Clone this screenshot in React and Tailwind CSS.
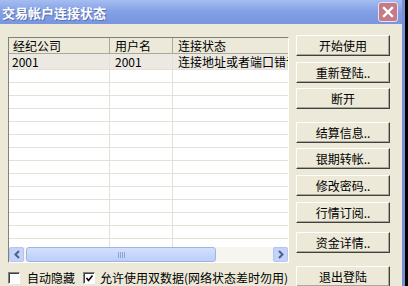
import React from 'react';

const buttons = [
  { label: '开始使用', mt: 'mt-[11px]' },
  { label: '重新登陆..', mt: 'mt-[6px]' },
  { label: '断开', mt: 'mt-[5px]' },
  { label: '结算信息..', mt: 'mt-[13px]' },
  { label: '银期转帐..', mt: 'mt-[5px]' },
  { label: '修改密码..', mt: 'mt-[6px]' },
  { label: '行情订阅..', mt: 'mt-[6px]' },
  { label: '资金详情..', mt: 'mt-[9px]' },
  { label: '退出登陆', mt: 'mt-[13px]' },
];

const emptyRows = Array.from({ length: 14 });

function XpButton({ label, mt }) {
  return (
    <button
      className={`${mt} h-[21px] w-[94px] shrink-0 border border-t-white border-l-white border-r-[#404040] border-b-[#404040] bg-[#ece9d8] text-[12px] leading-none text-black shadow-[inset_-1px_-1px_0_#aca899]`}
    >
      {label}
    </button>
  );
}

function Chevron({ dir }) {
  return (
    <svg width="8" height="9" viewBox="0 0 8 9">
      {dir === 'left' ? (
        <path d="M6 1 L2.5 4.5 L6 8" fill="none" stroke="#4d6185" strokeWidth="2" />
      ) : (
        <path d="M2 1 L5.5 4.5 L2 8" fill="none" stroke="#4d6185" strokeWidth="2" />
      )}
    </svg>
  );
}

function Checkbox({ checked }) {
  return (
    <span className="flex h-[12px] w-[12px] items-center justify-center border border-t-[#808080] border-l-[#808080] border-r-white border-b-white bg-white shadow-[inset_1px_1px_0_#404040]">
      {checked && (
        <svg width="9" height="9" viewBox="0 0 9 9">
          <path d="M1.5 4 L3.5 6.5 L7.5 1.5" fill="none" stroke="#000" strokeWidth="1.6" />
        </svg>
      )}
    </span>
  );
}

export default function App() {
  return (
    <div className="flex h-[286px] w-[408px] overflow-hidden bg-black font-['Noto_Sans_CJK_SC','Liberation_Sans',sans-serif]">
      <div className="flex w-[405px] shrink-0 flex-col border-r-[3px] border-[#7a8fd4] bg-[#ece9d8]">
        {/* 标题栏 */}
        <div className="flex h-[24px] shrink-0 items-center justify-between bg-gradient-to-b from-[#a6bdf1] via-[#829fe5] to-[#7895df] pl-[2px] pr-[4px]">
          <span className="text-[13px] font-bold leading-none text-white [text-shadow:1px_1px_0_#5a6fae]">
            交易帐户连接状态
          </span>
          <span className="flex h-[20px] w-[20px] items-center justify-center rounded-[3px] border border-[#e8e0ec] bg-[#c57a88]">
            <svg width="12" height="12" viewBox="0 0 12 12">
              <path d="M2 2 L10 10 M10 2 L2 10" stroke="#fff" strokeWidth="2.4" strokeLinecap="square" />
            </svg>
          </span>
        </div>

        {/* 主体 */}
        <div className="flex flex-1">
          <div className="ml-[8px] flex w-[281px] flex-col">
            {/* 列表 */}
            <div className="mt-[13px] flex h-[226px] flex-col overflow-hidden border border-t-[#808080] border-l-[#808080] border-r-white border-b-white bg-white">
              <div className="flex h-[16px] shrink-0 border-b border-[#aca899] bg-[#ece9d8] text-[12px] leading-[15px] text-black">
                <div className="w-[101px] border-r border-[#aca899] pl-[4px]">经纪公司</div>
                <div className="w-[63px] border-r border-[#aca899] pl-[5px]">用户名</div>
                <div className="flex-1 pl-[5px]">连接状态</div>
              </div>
              <div className="relative flex-1 overflow-hidden">
                <div className="flex h-[16px] border-b border-[#e3e1d7] bg-[#ebe9e1] text-[12px] leading-[15px] text-black">
                  <div className="w-[101px] shrink-0 border-r border-[#e3e1d7] pl-[3px]">2001</div>
                  <div className="w-[63px] shrink-0 border-r border-[#e3e1d7] pl-[5px]">2001</div>
                  <div className="flex-1 overflow-hidden whitespace-nowrap pl-[5px]">连接地址或者端口错误</div>
                </div>
                {emptyRows.map((_, i) => (
                  <div key={i} className="flex h-[13px] border-b border-[#e3e1d7]">
                    <div className="w-[101px] shrink-0 border-r border-[#e3e1d7]" />
                    <div className="w-[63px] shrink-0 border-r border-[#e3e1d7]" />
                    <div className="flex-1" />
                  </div>
                ))}
              </div>
              {/* 水平滚动条 */}
              <div className="flex h-[15px] shrink-0 items-center bg-[#f6f5ef]">
                <div className="flex h-[15px] w-[15px] items-center justify-center rounded-[2px] border border-[#b4c6f0] bg-[#c3d3fb]">
                  <Chevron dir="left" />
                </div>
                <div className="ml-[2px] flex h-[15px] w-[190px] items-center justify-center rounded-[3px] border border-[#9fb4e6] bg-gradient-to-b from-[#d3e0fd] to-[#bccefa]">
                  <div className="flex gap-[1px]">
                    <span className="h-[6px] w-[1px] bg-[#8aa3dc]" />
                    <span className="h-[6px] w-[1px] bg-[#8aa3dc]" />
                    <span className="h-[6px] w-[1px] bg-[#8aa3dc]" />
                    <span className="h-[6px] w-[1px] bg-[#8aa3dc]" />
                  </div>
                </div>
                <div className="flex-1" />
                <div className="flex h-[15px] w-[15px] items-center justify-center rounded-[2px] border border-[#b4c6f0] bg-[#c3d3fb]">
                  <Chevron dir="right" />
                </div>
              </div>
            </div>

            {/* 复选框 */}
            <div className="mt-[9px] flex items-center text-[12px] leading-none text-black">
              <Checkbox checked={false} />
              <span className="ml-[7px]">自动隐藏</span>
              <span className="ml-[8px]">
                <Checkbox checked />
              </span>
              <span className="ml-[5px] whitespace-nowrap">允许使用双数据(网络状态差时勿用)</span>
            </div>
          </div>

          {/* 按钮列 */}
          <div className="ml-[7px] flex flex-col">
            {buttons.map((b) => (
              <XpButton key={b.label} label={b.label} mt={b.mt} />
            ))}
          </div>
        </div>
      </div>
    </div>
  );
}
